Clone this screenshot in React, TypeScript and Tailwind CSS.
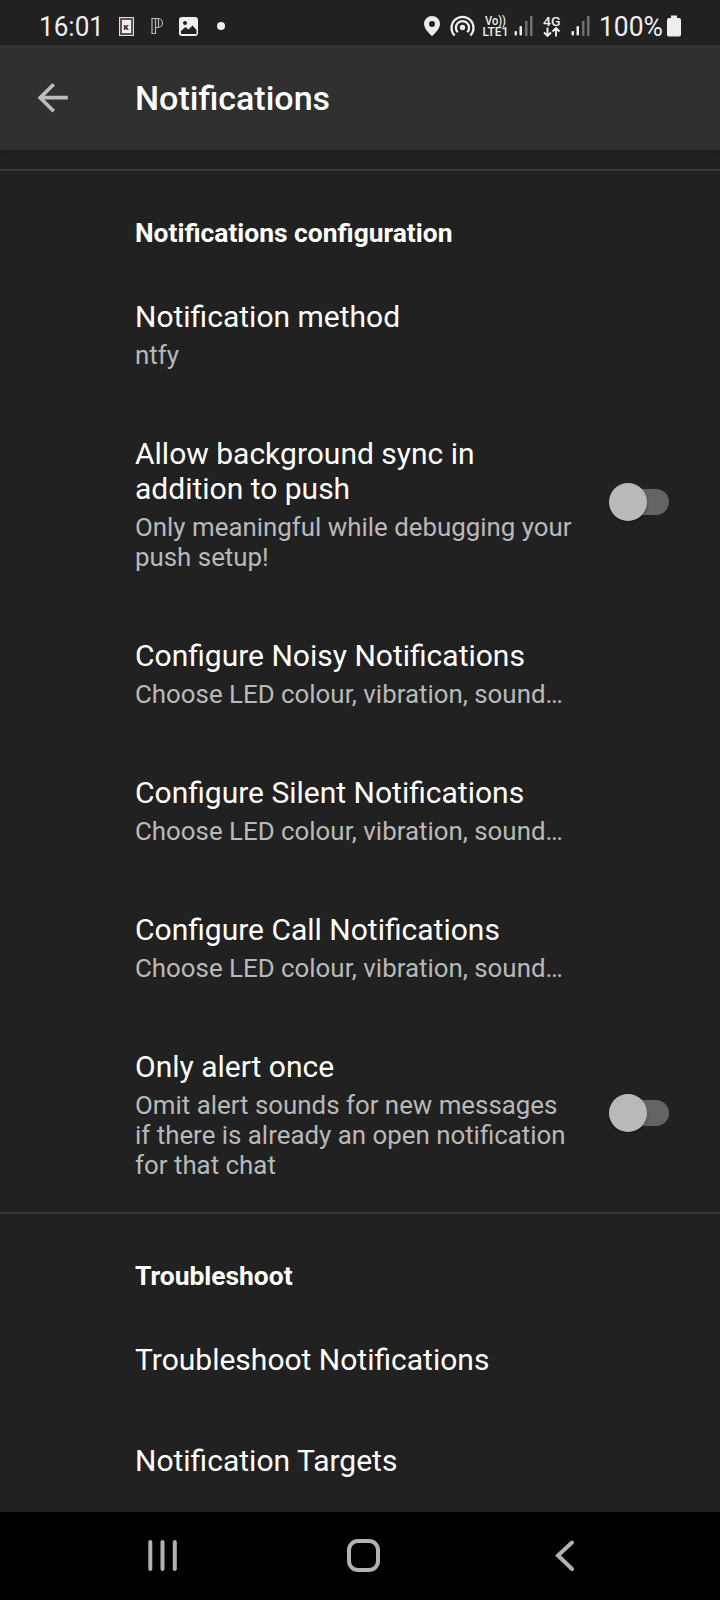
import React from "react";

function Toggle({ className = "" }: { className?: string }) {
  return (
    <div className={`flex h-[38px] w-[60.5px] shrink-0 items-center ${className}`}>
      <div className="flex h-[26px] w-full items-center rounded-full bg-[#646464]">
        <div className="h-[38px] w-[38px] shrink-0 rounded-full bg-[#b9b9b9] shadow-[0_2px_3px_rgba(0,0,0,0.25)]" />
      </div>
    </div>
  );
}

function Row({ title, summary, toggle }: { title: string; summary?: string; toggle?: string }) {
  return (
    <div className="flex items-center py-[33px] pl-[135px]">
      <div className="w-[440px]">
        <div className="text-[30px] leading-[35px] whitespace-pre-line text-white">{title}</div>
        {summary && (
          <div className="mt-1.5 text-[25.87px] leading-[30px] whitespace-pre-line text-[#b9b9b9]">{summary}</div>
        )}
      </div>
      {toggle && <Toggle className={toggle} />}
    </div>
  );
}

function Category({ title }: { title: string }) {
  return (
    <div className="h-[97px] border-t-2 border-[#383838] pt-[47px] pl-[135px] text-[26.4px] leading-[30px] font-bold text-white">
      {title}
    </div>
  );
}

function StatusBar() {
  return (
    <div className="h-[45px] bg-[#212121]">
      <svg width="720" height="45" viewBox="0 0 720 45" fill="#eeeeee" fontFamily="Roboto, sans-serif">
        <text x="39" y="35.500" fontSize="27" textLength="65" lengthAdjust="spacingAndGlyphs">16:01</text>
        <rect x="119.5" y="17.5" width="14" height="18" fill="#555" stroke="#ddd" />
        <rect x="122" y="20" width="9" height="13" />
        <text x="123.5" y="29.5" fontSize="8" fontWeight="900" fill="#222">K</text>
        <path
          d="M152 18.500h6a4.500 4.500 0 0 1 0 9h-2.500v6H152zM155.500 18.500v9M158.500 18.500v9"
          fill="none"
          stroke="#b8b8b8"
          strokeWidth="1.200"
        />
        <rect x="179" y="17" width="19" height="19" rx="3" />
        <circle cx="185" cy="23" r="2" fill="#212121" />
        <path d="M181 34v-3l4.500-4 3 2.500 4-4 4 4.500v4z" fill="#212121" />
        <circle cx="221" cy="26" r="4" />
        <path fillRule="evenodd" d="M432 16a8 8 0 0 0-8 8c0 5.500 8 12 8 12s8-6.500 8-12a8 8 0 0 0-8-8zm0 5a3 3 0 1 1 0 6 3 3 0 0 1 0-6z" />
        <g fill="none" stroke="#eee" strokeWidth="2.300">
          <path d="M454.600 35.500a11 11 0 1 1 15.800 0M457.800 32.300a6.600 6.600 0 1 1 9.400 0" />
        </g>
        <circle cx="462.500" cy="27.500" r="2.700" />
        <text fontSize="12.500" fontWeight="500">
          <tspan x="485" y="25" textLength="21" lengthAdjust="spacingAndGlyphs">Vo))</tspan>
          <tspan x="482.500" y="36" textLength="26" lengthAdjust="spacingAndGlyphs">LTE1</tspan>
        </text>
        {[514, 571].map((x) => (
          <g key={x}>
            <rect x={x + 0.5} y="31" width="2.500" height="4.500" rx="1" />
            <rect x={x + 5.500} y="26" width="2.500" height="9.500" rx="1" />
            <rect x={x + 11} y="21" width="2.500" height="15" fill="#707070" />
            <rect x={x + 16} y="16" width="2.500" height="20" fill="#707070" />
          </g>
        ))}
        <text x="543" y="25.500" fontSize="13.500" fontWeight="500" textLength="17.500" lengthAdjust="spacingAndGlyphs">4G</text>
        <path d="M547.500 27.500V36m-3.500-3.500 3.500 3.500 3.500-3.500M556 36.500V28m-3.500 3.500 3.500-3.500 3.500 3.500" fill="none" stroke="#eee" strokeWidth="1.900" />
        <text x="599" y="35.500" fontSize="27" textLength="64" lengthAdjust="spacingAndGlyphs">100%</text>
        <path d="M671 15.500h6V18h2a2 2 0 0 1 2 2v14.500a2 2 0 0 1-2 2h-10a2 2 0 0 1-2-2V20a2 2 0 0 1 2-2h2z" />
      </svg>
    </div>
  );
}

export default function App() {
  return (
    <div className="flex h-[1600px] w-[720px] flex-col overflow-hidden bg-[#212121] font-['Roboto',sans-serif]">
      <StatusBar />
      <header className="z-10 flex h-[105px] shrink-0 items-center bg-[#303030] pl-[37px] shadow-[0_1px_4px_rgba(0,0,0,0.3)]">
        <svg width="32" height="32" viewBox="0 0 32 32" fill="none" stroke="#bcbcbc" strokeWidth="3.700">
          <path d="M16.700 2.200 3.200 15.700 16.700 29.200M3.200 15.700H30.800" />
        </svg>
        <h1 className="ml-[66px] text-[34px] leading-[40px] font-medium text-white">Notifications</h1>
      </header>
      <main className="h-[1362px] shrink-0 pt-[19px]">
        <Category title="Notifications configuration" />
        <Row title="Notification method" summary="ntfy" />
        <Row
          title={"Allow background sync in\naddition to push"}
          summary={"Only meaningful while debugging your\npush setup!"}
          toggle="relative -top-0.5 ml-[33.5px]"
        />
        <Row title="Configure Noisy Notifications" summary="Choose LED colour, vibration, sound…" />
        <Row title="Configure Silent Notifications" summary="Choose LED colour, vibration, sound…" />
        <Row title="Configure Call Notifications" summary="Choose LED colour, vibration, sound…" />
        <Row
          title="Only alert once"
          summary={"Omit alert sounds for new messages\nif there is already an open notification\nfor that chat"}
          toggle="relative -top-0.5 ml-[33.5px]"
        />
        <div className="-mt-px">
          <Category title="Troubleshoot" />
        </div>
        <Row title="Troubleshoot Notifications" />
        <Row title="Notification Targets" />
      </main>
      <nav className="flex h-[88px] shrink-0 bg-black">
        <svg width="720" height="88" viewBox="0 0 720 88" fill="none" stroke="#b2b2b2" strokeWidth="4" strokeLinecap="round">
          <path d="M150.300 30v27M162.500 30v27M174.800 30v27" />
          <rect x="349" y="29" width="29" height="29" rx="9" />
          <path d="M572 30.500 558 43.500 572 57" />
        </svg>
      </nav>
    </div>
  );
}
